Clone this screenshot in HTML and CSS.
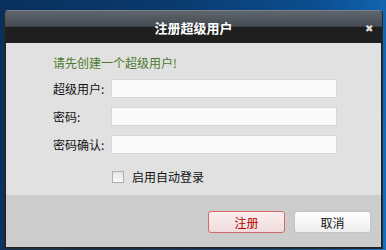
FILE: index.html
```html
<!DOCTYPE html>
<html lang="zh-CN">
<head>
    <meta charset="UTF-8">
    <title>注册超级用户</title>
    <link rel="stylesheet" href="styles.css">
</head>
<body>
    <div class="dialog">
        <div class="titlebar">
            <span class="title">注册超级用户</span>
            <span class="close">✖</span>
        </div>

        <div class="content">
            <p class="hint">请先创建一个超级用户!</p>

            <div class="row">
                <label>超级用户:</label>
                <input type="text" class="field">
            </div>
            <div class="row">
                <label>密码:</label>
                <input type="password" class="field">
            </div>
            <div class="row">
                <label>密码确认:</label>
                <input type="password" class="field">
            </div>

            <div class="check-row">
                <span class="checkbox"></span>
                <span>启用自动登录</span>
            </div>
        </div>

        <div class="footer">
            <button class="btn btn-primary">注册</button>
            <button class="btn">取消</button>
        </div>
    </div>
</body>
</html>
```

FILE: styles.css
```css
* {
    box-sizing: border-box;
    margin: 0;
    padding: 0;
}

html, body {
    height: 100%;
    overflow: hidden;
}

body {
    font-family: "Noto Sans CJK SC", "Noto Sans", sans-serif;
    font-size: 12px;
    color: #111;
    padding: 10px 3px 1px 4px;
    background: linear-gradient(100deg, #08305c 0%, #0a3a6e 40%, #0c4f92 75%, #1473c4 100%);
}

.dialog {
    height: 239px;
    display: flex;
    flex-direction: column;
    border: 1px solid #2a2a2a;
    border-top-color: #7a8088;
    border-radius: 4px 4px 0 0;
    background: #1f1f1f;
    overflow: hidden;
}

/* Title bar */
.titlebar {
    height: 32px;
    flex-shrink: 0;
    display: flex;
    align-items: center;
    justify-content: center;
    position: relative;
    background: linear-gradient(to bottom, #60666e 0%, #454a52 48%, #1f1f1f 50%, #1f1f1f 100%);
}

.title {
    color: #fff;
    font-weight: bold;
    font-size: 13px;
    margin-top: 1px;
}

.close {
    position: absolute;
    right: 9px;
    top: 9px;
    color: #ddd;
    font-size: 10px;
}

/* Form area */
.content {
    flex: 1;
    background: #e1e1e1;
    margin: 0 1px;
    padding: 11px 0 0 47px;
}

.hint {
    color: #4c7a2c;
    font-size: 12px;
    margin-bottom: 8px;
}

.row {
    display: flex;
    align-items: center;
    margin-bottom: 9px;
}

.row label {
    width: 58px;
    font-size: 12px;
}

.field {
    width: 226px;
    height: 19px;
    background: #fafafa;
    border: 1px solid #d6d6d6;
    outline: none;
}

.check-row {
    display: flex;
    align-items: center;
    gap: 8px;
    margin: 14px 0 0 59px;
}

.checkbox {
    width: 12px;
    height: 12px;
    border: 1px solid #b0b0b0;
    background: linear-gradient(to bottom, #e4e4e4, #fafafa);
}

/* Buttons */
.footer {
    height: 52px;
    flex-shrink: 0;
    background: #cccccc;
    margin: 0 1px 1px;
    display: flex;
    justify-content: flex-end;
    align-items: flex-start;
    gap: 9px;
    padding: 16px 10px 0 0;
}

.btn {
    width: 77px;
    height: 22px;
    font-family: inherit;
    font-size: 12px;
    color: #111;
    border: 1px solid #c4c4c4;
    border-radius: 3px;
    background: linear-gradient(to bottom, #ffffff, #eeeeee);
}

.btn-primary {
    color: #b50000;
    border-color: #d46a6a;
    background: linear-gradient(to bottom, #fbeeee, #f0dcdc);
}
```
